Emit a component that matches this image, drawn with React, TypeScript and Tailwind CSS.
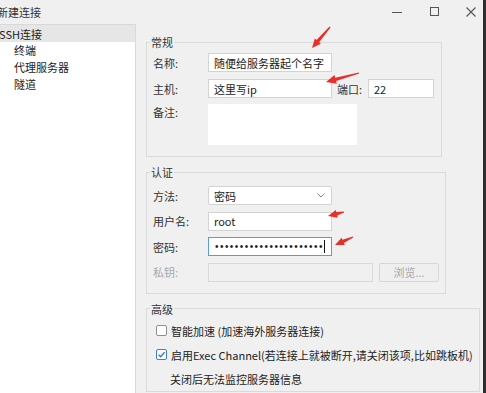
import React from 'react'

// one red annotation arrow: tapered shaft plus a triangular head
function arrowPoints(x1: number, y1: number, x2: number, y2: number, head = 9, headW = 8, w0 = 1.2, w1 = 3.5) {
  const dx = x2 - x1
  const dy = y2 - y1
  const len = Math.hypot(dx, dy)
  const ux = dx / len
  const uy = dy / len
  const nx = -uy
  const ny = ux
  const bx = x2 - ux * head
  const by = y2 - uy * head
  const pts = [
    [x1 + nx * w0 / 2, y1 + ny * w0 / 2],
    [bx + nx * w1 / 2, by + ny * w1 / 2],
    [bx + nx * headW / 2, by + ny * headW / 2],
    [x2, y2],
    [bx - nx * headW / 2, by - ny * headW / 2],
    [bx - nx * w1 / 2, by - ny * w1 / 2],
    [x1 - nx * w0 / 2, y1 - ny * w0 / 2],
  ]
  return pts.map(p => `${p[0].toFixed(1)},${p[1].toFixed(1)}`).join(' ')
}

const ARROWS: [number, number, number, number, number?, number?][] = [
  [330, 27, 312, 48],
  [359, 73, 326, 82, 10, 9],
  [344, 212, 328, 216, 9, 8],
  [353, 237, 335, 245, 9, 8],
]

const SIDE_ITEMS = ['终端', '代理服务器', '隧道']

function Input({ children, className = '' }: { children?: React.ReactNode; className?: string }) {
  return (
    <div className={`h-[19px] bg-white border border-[#d3d3d3] flex items-center pl-[5px] text-[#222] ${className}`}>
      {children}
    </div>
  )
}

function Row({ label, children, muted }: { label: string; children: React.ReactNode; muted?: boolean }) {
  return (
    <div className="flex items-center h-[19px]">
      <span className={`w-[55px] shrink-0 ${muted ? 'text-[#a8a8a8]' : 'text-[#333]'}`}>{label}</span>
      {children}
    </div>
  )
}

function Checkbox({ checked }: { checked?: boolean }) {
  return (
    <span className={`w-[11px] h-[11px] shrink-0 rounded-[2px] border bg-white flex items-center justify-center ${checked ? 'border-[#3d7fd0]' : 'border-[#8f8f8f]'}`}>
      {checked && (
        <svg width="9" height="9" viewBox="0 0 9 9">
          <path d="M1.5 4.6 L3.6 6.7 L7.6 2.2" fill="none" stroke="#2f74cc" strokeWidth="1.3" />
        </svg>
      )}
    </span>
  )
}

export default function App() {
  return (
    <div className="w-[486px] h-[393px] overflow-hidden relative flex bg-[#f0f0f0] text-[11px] leading-[16px] text-[#333] font-['Noto_Sans_CJK_SC','Noto_Sans',sans-serif]">
      <div className="flex-1 flex flex-col min-w-0">
        {/* Title bar */}
        <div className="h-[24px] shrink-0 flex items-center">
          <span className="-ml-[3px] text-[#333]">新建连接</span>
          <div className="ml-auto flex items-center mr-[7px]">
            <span className="w-[10px] h-[1px] bg-[#555]" />
            <span className="ml-[28px] w-[9px] h-[9px] border border-[#555] -mt-[1px]" />
            <svg className="ml-[27px] -mt-[1px]" width="10" height="10" viewBox="0 0 10 10">
              <path d="M0.5 0.5 L9.5 9.5 M9.5 0.5 L0.5 9.5" stroke="#555" strokeWidth="1.1" />
            </svg>
          </div>
        </div>

        <div className="flex flex-1 min-h-0">
          {/* Sidebar tree */}
          <aside className="w-[136px] shrink-0 bg-white border-t border-r border-[#d9d9d9]">
            <div className="h-[17px] bg-[#e6e6e6] flex items-center -ml-[1px] text-[#222]">SSH连接</div>
            {SIDE_ITEMS.map(item => (
              <div key={item} className="h-[16.7px] flex items-center pl-[14px] text-[#222]">{item}</div>
            ))}
          </aside>

          {/* Form */}
          <main className="flex-1 pl-[10px] pt-[10px]">
            <fieldset className="w-[296px] border border-[#dadada] pl-[6px] pb-[11px]">
              <legend className="-ml-[3px] px-[1px] leading-[16px] text-[#333]">常规</legend>
              <div className="pt-[3px] flex flex-col gap-[7px]">
                <Row label="名称:">
                  <Input className="w-[124px]">随便给服务器起个名字</Input>
                </Row>
                <Row label="主机:">
                  <Input className="w-[124px]">这里写ip</Input>
                  <span className="ml-[5px] w-[31px] text-[#333]">端口:</span>
                  <Input className="w-[66px]">22</Input>
                </Row>
                <div className="flex items-start -mt-[1px]">
                  <span className="w-[55px] shrink-0 leading-[17px] text-[#333]">备注:</span>
                  <div className="w-[149px] h-[41px] bg-white" />
                </div>
              </div>
            </fieldset>

            <fieldset className="mt-[7px] w-[300px] border border-[#dadada] pl-[6px] pb-[11px]">
              <legend className="-ml-[3px] px-[1px] leading-[16px] text-[#333]">认证</legend>
              <div className="pt-[6px] flex flex-col gap-[6.5px]">
                <Row label="方法:">
                  <Input className="w-[124px] rounded-[2px] pr-[6px]">
                    <span className="flex-1">密码</span>
                    <svg width="8" height="5" viewBox="0 0 8 5">
                      <path d="M0.5 0.5 L4 4 L7.5 0.5" fill="none" stroke="#888" strokeWidth="1" />
                    </svg>
                  </Input>
                </Row>
                <Row label="用户名:">
                  <Input className="w-[124px]">root</Input>
                </Row>
                <Row label="密码:">
                  <div className="w-[124px] h-[19px] bg-white border border-[#5d9ad9] flex items-center pl-[6px]">
                    <span className="font-['Liberation_Sans',sans-serif] text-[10px] tracking-[1.45px] text-[#222] leading-none">
                      ••••••••••••••••••••••
                    </span>
                    <span className="w-[1px] h-[13px] bg-[#111]" />
                  </div>
                </Row>
                <Row label="私钥:" muted>
                  <div className="w-[165px] h-[19px] bg-[#f0f0f0] border border-[#d9d9d9]" />
                  <div className="ml-[6px] w-[60px] h-[19px] rounded-[2px] bg-[#efefef] border border-[#d7d7d7] flex items-center justify-center text-[#a8a8a8]">
                    浏览...
                  </div>
                </Row>
              </div>
            </fieldset>

            <fieldset className="mt-[7px] w-[334px] border border-[#dadada] pl-[9px]">
              <legend className="-ml-[6px] px-[1px] leading-[16px] text-[#333]">高级</legend>
              <div className="pt-[2px] flex flex-col">
                <div className="h-[24px] flex items-center gap-[4px] text-[#222]">
                  <Checkbox />
                  <span>智能加速 (加速海外服务器连接)</span>
                </div>
                <div className="h-[24px] flex items-center gap-[4px] text-[#222] whitespace-nowrap">
                  <Checkbox checked />
                  <span>启用Exec Channel(若连接上就被断开,请关闭该项,比如跳板机)</span>
                </div>
                <div className="h-[24px] flex items-center pl-[14px] text-[#222]">关闭后无法监控服务器信息</div>
              </div>
            </fieldset>
          </main>
        </div>
      </div>

      {/* dark window edge */}
      <div className="w-[3px] shrink-0 bg-[#2e2e2e]" />

      {/* annotation arrows */}
      <svg className="absolute inset-0 pointer-events-none" width="486" height="393">
        {ARROWS.map((a, i) => (
          <polygon key={i} points={arrowPoints(a[0], a[1], a[2], a[3], a[4] ?? 9, a[5] ?? 8)} fill="#e8302a" />
        ))}
      </svg>
    </div>
  )
}
